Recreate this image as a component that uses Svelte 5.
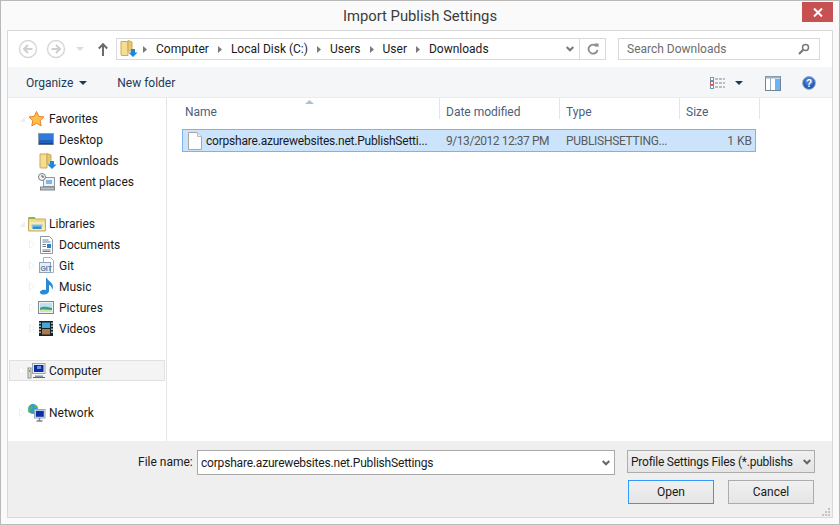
<script>
  const groups = [
    { id: 'fav', label: 'Favorites', icon: 'star', children: [['Desktop','desktop'],['Downloads','folderdl'],['Recent places','recent']] },
    { id: 'lib', label: 'Libraries', icon: 'libs', children: [['Documents','docs'],['Git','git'],['Music','music'],['Pictures','pics'],['Videos','videos']] },
    { id: 'comp', label: 'Computer', icon: 'computer', children: [], active: true },
    { id: 'net', label: 'Network', icon: 'network', children: [] }
  ];
  const crumbs = ['Computer','Local Disk (C:)','Users','User','Downloads'];
</script>

{#snippet icon(name)}
  <svg class="ico" width="20" height="20" viewBox="0 0 20 20">
    {#if name === 'star'}
      <path d="M9.500 2.500l2.300 4.800 5.200.7-3.800 3.600 1 5.200-4.700-2.500-4.700 2.500 1-5.200L2 8l5.200-.7z" fill="#fdbf4a" stroke="#e8842c" stroke-width="1"/>
    {:else if name === 'desktop'}
      <rect x="1.500" y="3.500" width="15" height="11" fill="#1f5fbf" stroke="#8b9bab"/><rect x="2" y="4" width="14" height="6" fill="#2f7bd8"/><rect x="2" y="13" width="14" height="1.500" fill="#27446b"/>
    {:else if name === 'folderdl'}
      <path d="M3 3h7v14H4a1 1 0 0 1-1-1z" fill="#f6dd8f" stroke="#c9a95a"/><path d="M10 2.500l4 1.500v9h-4z" fill="#e8c96f" stroke="#c9a95a"/><path d="M13 10h4v3.500h2.500L15 18l-4.500-4.500H13z" fill="#1b87dd"/>
    {:else if name === 'recent'}
      <rect x="6.500" y="5.500" width="11" height="9" fill="#eef3f7" stroke="#8e9aa3"/><rect x="9" y="8" width="6" height="4" fill="#7fb8dc"/><circle cx="5" cy="5" r="3.500" fill="#f4f4f4" stroke="#77807f"/><path d="M5 3v2h2" fill="none" stroke="#555"/><rect x="3.500" y="15" width="14" height="3" fill="#b8bfc4" stroke="#7d868c"/>
    {:else if name === 'libs'}
      <path d="M1.500 3.500h6l1 1.500h10v12h-17z" fill="#f3d98c" stroke="#c8aa5e"/><rect x="2" y="3" width="6" height="2" fill="#7ac143"/><path d="M3 8h14l1 8H2z" fill="#f9e9b4"/><path d="M5.500 15v-3.500h9V15z" fill="#2c8fd6"/><path d="M4.500 11.500h11" stroke="#7cc0ea" stroke-width="2"/>
    {:else if name === 'docs'}
      <path d="M3.500 1.500h9l3 3v14h-12z" fill="#fff" stroke="#8d97a3"/><path d="M5.500 5h6M5.500 7h8M5.500 15h8M5.500 16.500h8" stroke="#6e7f92"/><rect x="10" y="9" width="4" height="4" fill="#2c7fc4"/><path d="M5.500 9.500h3.500M5.500 11.500h3.500" stroke="#6e7f92"/>
    {:else if name === 'git'}
      <path d="M6.500 1.500h7l3 3v12h-10z" fill="#fff" stroke="#a2b3c5"/><rect x="2.500" y="6.500" width="11" height="10" fill="#e5eef7" stroke="#8ea4bc"/><text x="3.400" y="14.500" font-size="7" font-family="Liberation Sans" font-weight="700" fill="#5a7a9c">GIT</text>
    {:else if name === 'music'}
      <path d="M10 1c.5 3 6 4 6 9 0 1-.5 2-1 3 .2-3-1.500-4.500-3-5v6c0 2.500-3 4-5.500 3.500C3.500 17.500 2 15.500 3.500 14c1.500-1.500 4-1.500 5.500-1V1z" fill="#2b8ad6"/>
    {:else if name === 'pics'}
      <rect x="1.500" y="3.500" width="15" height="12" fill="#eef2f5" stroke="#7f8a94"/><rect x="3" y="5" width="12" height="9" fill="#bfe0ef"/><path d="M3 10c3-2 7-1 12 0v4H3z" fill="#3d9a8e"/><path d="M3 12c4-1 8 0 12 0v2H3z" fill="#d8e49a"/>
    {:else if name === 'videos'}
      <rect x="2" y="2" width="14" height="15" fill="#10262c"/><rect x="5" y="3.500" width="8" height="5.500" fill="#4ba3d8"/><rect x="5" y="10" width="8" height="5.500" fill="#b0764c"/><path d="M3 3.500v12M15 3.500v12" stroke="#d5dde0" stroke-width="1.500" stroke-dasharray="1.500 1.500"/>
    {:else if name === 'computer'}
      <rect x="1" y="7" width="3" height="10" fill="#d9ded3" stroke="#8d9489"/><rect x="1.800" y="9" width="1.400" height="2" fill="#76b043"/><rect x="5.500" y="2.500" width="12.500" height="10" fill="#e6ebef" stroke="#9aa4ad"/><rect x="7" y="4" width="9.500" height="7" fill="#0b2ea8"/><rect x="10" y="5" width="4" height="3" fill="#6c8de0"/><path d="M8 14.500h8v1.500H8z" fill="#8b949c"/><path d="M6 16.500h12" stroke="#5d666e"/>
    {:else if name === 'network'}
      <circle cx="6" cy="6" r="5" fill="#2f9bd8"/><path d="M3 3c2 0 3 1 3 2S3 6 3 8s2 2 3 3l-5-2zM6 1.500c2 1 4 1 5 3L8 5z" fill="#5bb947"/><rect x="7.500" y="6.500" width="10.500" height="8.500" fill="#e6ebef" stroke="#9aa4ad"/><rect x="8.800" y="7.800" width="8" height="6" fill="#0b2ea8"/><path d="M12.500 15v2.500M9.500 18h6" stroke="#7c868f" stroke-width="1.500"/>
    {/if}
  </svg>
{/snippet}

{#snippet tri()}
  <svg class="tree-tri" width="6" height="9" viewBox="0 0 6 9"><path d="M.5.500v8l5-4z" fill="#fff" stroke="#efefef"/></svg>
{/snippet}
{#snippet opened()}
  <svg class="tree-tri" width="6" height="9" viewBox="0 0 6 9"><path d="M6 2.500v5.500H.5z" fill="#eeeeee"/></svg>
{/snippet}

<div class="window">
  <header class="titlebar">
    <span class="title">Import Publish Settings</span>
    <button class="close" aria-label="Close">
      <svg width="10" height="9" viewBox="0 0 10 9"><path d="M1 .5l8 8M9 .5l-8 8" stroke="#fff" stroke-width="2"/></svg>
    </button>
  </header>

  <div class="panel">
    <div class="nav">
      <svg class="circ" width="20" height="20" viewBox="0 0 20 20"><circle cx="10" cy="10" r="8.500" fill="#fff" stroke="#d6d6d6" stroke-width="1.400"/><path d="M14.500 10H6.500M10 6l-4 4 4 4" fill="none" stroke="#cfcfcf" stroke-width="2"/></svg>
      <svg class="circ fwd" width="20" height="20" viewBox="0 0 20 20"><circle cx="10" cy="10" r="8.500" fill="#fff" stroke="#d6d6d6" stroke-width="1.400"/><path d="M5.500 10h8M10 6l4 4-4 4" fill="none" stroke="#cfcfcf" stroke-width="2"/></svg>
      <svg class="recent-caret" width="8" height="4" viewBox="0 0 8 4"><path d="M0 0h8L4 4z" fill="#dcdcdc"/></svg>
      <svg class="up" width="10" height="13" viewBox="0 0 10 13"><path d="M5 13V2M.8 5.500L5 1.200l4.200 4.300" fill="none" stroke="#6b6b6b" stroke-width="2"/></svg>
      <div class="address">
        <svg class="addr-ico" width="20" height="20" viewBox="0 0 20 20"><path d="M3 2.500h7v14H4a1 1 0 0 1-1-1z" fill="#f6dd8f" stroke="#c9a95a"/><path d="M10 1.500l4 1.500v9h-4z" fill="#e8c96f" stroke="#c9a95a"/><path d="M13 10h4v3.500h2.500L15 18l-4.500-4.500H13z" fill="#1b87dd"/></svg>
        {#each crumbs as c}
          <svg class="crumb-arrow" width="4" height="7" viewBox="0 0 4 7"><path d="M0 0l4 3.500L0 7z" fill="#7a7a7a"/></svg>
          <span class="crumb">{c}</span>
        {/each}
        <svg class="addr-drop" width="8" height="6" viewBox="0 0 8 6"><path d="M.7 1L4 4.300 7.300 1" fill="none" stroke="#777" stroke-width="2"/></svg>
        <span class="refresh">
          <svg width="12" height="12" viewBox="0 0 12 12"><path d="M9.700 3.500A4.500 4.500 0 1 0 10.500 7" fill="none" stroke="#8b8b8b" stroke-width="1.800"/><path d="M7.500 0.500h4v4z" fill="#8b8b8b"/></svg>
        </span>
      </div>
      <div class="search">
        <span>Search Downloads</span>
        <svg width="12" height="12" viewBox="0 0 12 12"><circle cx="7.500" cy="4.500" r="3" fill="none" stroke="#777" stroke-width="1.500"/><path d="M5.200 6.800L1 11" stroke="#777" stroke-width="2"/></svg>
      </div>
    </div>

    <div class="toolbar">
      <span class="tool organize">Organize</span>
      <svg class="caret" width="8" height="4" viewBox="0 0 8 4"><path d="M0 0h8L4 4z" fill="#1e395b"/></svg>
      <span class="tool newfolder">New folder</span>
      <span class="spacer"></span>
      <svg class="viewicon" width="15" height="12" viewBox="0 0 15 12">
        <rect x=".500" y=".500" width="3" height="3" fill="#fff" stroke="#7b93ae"/><rect x=".500" y="4.500" width="3" height="3" fill="#fff" stroke="#c45c5c"/><rect x=".500" y="8.500" width="3" height="3" fill="#fff" stroke="#7b93ae"/>
        <path d="M5 2h10M5 6h10M5 10h10" stroke="#7b8794" stroke-dasharray="3 1"/>
      </svg>
      <svg class="caret view-caret" width="8" height="4" viewBox="0 0 8 4"><path d="M0 0h8L4 4z" fill="#1e395b"/></svg>
      <svg class="pane" width="16" height="15" viewBox="0 0 16 15"><rect x=".500" y=".500" width="15" height="14" fill="#fff" stroke="#6e8499"/><rect x=".500" y=".500" width="15" height="2" fill="#9fb2c4"/><path d="M5.500 2v12" stroke="#9fb2c4"/><rect x="10" y="3" width="5" height="11" fill="#6cb4f5"/></svg>
      <svg class="help" width="14" height="14" viewBox="0 0 14 14"><circle cx="7" cy="7" r="6.500" fill="#2a5cb5" stroke="#a9b7c7"/><circle cx="7" cy="5" r="4.500" fill="#5f8fdc" opacity=".6"/><text x="7" y="11" font-size="10" font-weight="700" text-anchor="middle" font-family="Liberation Sans" fill="#fff">?</text></svg>
    </div>

    <div class="main">
      <nav class="side">
        {#each groups as g}
          <div class="group">
            <div class="row top" class:active={g.active}>
              {#if g.children.length}{@render opened()}{:else}{@render tri()}{/if}
              {@render icon(g.icon)}
              <span>{g.label}</span>
            </div>
            {#each g.children as [label, ic]}
              <div class="row child">
                {#if g.id === 'lib'}{@render tri()}{:else}<span class="tri-gap"></span>{/if}
                {@render icon(ic)}
                <span>{label}</span>
              </div>
            {/each}
          </div>
        {/each}
      </nav>

      <section class="list">
        <div class="head">
          <svg class="sort" width="9" height="4" viewBox="0 0 9 4"><path d="M4.500 0L9 4H0z" fill="#a8c4dc"/></svg>
          <div class="col c-name">Name</div>
          <div class="col c-date">Date modified</div>
          <div class="col c-type">Type</div>
          <div class="col c-size">Size</div>
        </div>
        <div class="file">
          <svg class="fileico" width="16" height="18" viewBox="0 0 16 18"><path d="M1.500.500h9l4 4v13h-13z" fill="#fdfdfd" stroke="#a7a7a7"/><path d="M10.500.500v4h4" fill="#eee" stroke="#bdbdbd"/></svg>
          <span class="f-name">corpshare.azurewebsites.net.PublishSetti...</span>
          <span class="f-date">9/13/2012 12:37 PM</span>
          <span class="f-type">PUBLISHSETTING...</span>
          <span class="f-size">1 KB</span>
        </div>
      </section>
    </div>

    <footer class="bottom">
      <div class="line1">
        <label class="fn" for="fname">File name:</label>
        <div class="input" id="fname">
          <span class="input-text">corpshare.azurewebsites.net.PublishSettings</span>
          <svg width="8" height="6" viewBox="0 0 8 6"><path d="M.7 1L4 4.300 7.300 1" fill="none" stroke="#666" stroke-width="2"/></svg>
        </div>
        <div class="filter">
          <span class="filter-text">Profile Settings Files (*.publishs</span>
          <svg width="8" height="6" viewBox="0 0 8 6"><path d="M.7 1L4 4.300 7.300 1" fill="none" stroke="#666" stroke-width="2"/></svg>
        </div>
      </div>
      <div class="line2">
        <button class="btn primary">Open</button>
        <button class="btn">Cancel</button>
      </div>
      <svg class="grip" width="8" height="8" viewBox="0 0 8 8"><path d="M6 0h2v2H6zM3 3h2v2H3zM6 3h2v2H6zM0 6h2v2H0zM3 6h2v2H3zM6 6h2v2H6z" fill="#c4c4c4"/></svg>
    </footer>
  </div>
</div>

<style>
  :global(body) { margin: 0; }
  * { box-sizing: border-box; }
  .window {
    width: 840px; height: 525px; position: relative; overflow: hidden;
    display: flex; flex-direction: column;
    background: #fafafa; border: 1px solid #b9b9b9; border-bottom-color: #bcbcbc;
    padding: 0 6px 6px 6px;
    font: 12px/16px Roboto, "Open Sans", sans-serif;
    color: #1a1a1a;
  }
  .titlebar { height: 29px; flex: none; display: flex; align-items: center; justify-content: center; }
  .title { font-size: 14.800px; color: #3c3c3c; margin-top: 1px; }
  .close {
    position: absolute; top: 1px; right: 6px; width: 31px; height: 20px; padding: 0; border: 0;
    background: #c75050; display: flex; align-items: center; justify-content: center;
  }
  .panel { flex: 1; min-height: 0; display: flex; flex-direction: column; border: 1px solid #d9d9d9; background: #fff; }

  .nav { height: 36px; flex: none; display: flex; align-items: center; padding: 0 12px 0 10px; }
  .circ { margin-left: 0; flex: none; }
  .circ.fwd { margin-left: 8px; }
  .recent-caret { margin-left: 10px; flex: none; }
  .up { margin-left: 14px; margin-right: 8px; flex: none; }
  .address {
    width: 490px; height: 22px; flex: none; display: flex; align-items: center;
    border: 1px solid #d9d9d9; padding-left: 1px; color: #1a1a1a;
  }
  .addr-ico { margin-right: 5px; flex: none; }
  .crumb-arrow { flex: none; margin-right: 9px; }
  .crumb { margin-right: 9px; white-space: nowrap; }
  .addr-drop { margin-left: auto; margin-right: 5px; flex: none; }
  .refresh { width: 26px; height: 20px; border-left: 1px solid #d9d9d9; display: flex; align-items: center; justify-content: center; flex: none; }
  .search {
    width: 202px; height: 22px; margin-left: auto; flex: none; display: flex; align-items: center; justify-content: space-between;
    border: 1px solid #d9d9d9; padding: 0 9px 0 8px; color: #6d6d6d;
  }

  .toolbar { height: 31px; flex: none; display: flex; align-items: center; background: #f5f6f7; border-bottom: 1px solid #ececec; color: #1e395b; padding: 2px 16px 0 18px; }
  .caret { flex: none; }
  .organize { margin-right: 6px; }
  .newfolder { margin-left: 30px; }
  .spacer { flex: 1; }
  .viewicon { flex: none; margin-right: 10px; }
  .view-caret { margin-right: 22px; }
  .pane { flex: none; margin-right: 21px; }
  .help { flex: none; }

  .main { flex: 1; min-height: 0; display: flex; }
  .side { width: 159px; flex: none; border-right: 1px solid #e5e5e5; padding-top: 10px; display: flex; flex-direction: column; gap: 21px; }
  .row { height: 21px; display: flex; align-items: center; white-space: nowrap; }
  .top { padding-left: 11px; }
  .top .ico { margin: 0 2px 0 2px; }
  .child { padding-left: 21px; }
  .child .ico { margin: 0 2px 0 2px; }
  .tree-tri { flex: none; }
  .tri-gap { width: 6px; flex: none; }
  .ico { flex: none; }
  .row.active { background: #f4f4f4; border: 1px solid #e0e0e0; margin-left: 1px; margin-right: 1px; padding-left: 9px; }

  .list { flex: 1; min-width: 0; position: relative; }
  .head { height: 21px; display: flex; color: #4c607a; position: relative; }
  .sort { position: absolute; left: 138px; top: 2px; }
  .col { border-right: 1px solid #e5e5e5; padding: 6px 0 0 6px; }
  .c-name { width: 273px; padding-left: 18px; }
  .c-date, .c-type, .c-size { width: 120px; }
  .c-size { width: 80px; }
  .file {
    margin: 10px 0 0 15px; width: 574px; height: 23px; display: flex; align-items: center; position: relative;
    background: #cce4fb; border: 1px solid #7cb3ea; color: #5a5a5a; white-space: nowrap;
  }
  .fileico { margin-left: 4px; margin-right: 3px; flex: none; }
  .f-name { color: #1a1a1a; width: 240px; flex: none; letter-spacing: -.21px; }
  .f-date { width: 120px; flex: none; letter-spacing: -.44px; }
  .f-type { flex: 1; letter-spacing: -.3px; }
  .f-size { margin-right: 3px; }

  .bottom { height: 76px; flex: none; background: #efefef; position: relative; padding: 9px 18px 0 0; }
  .line1 { display: flex; align-items: flex-start; }
  .fn { margin-left: 130px; width: 59px; margin-top: 4px; flex: none; }
  .input {
    width: 418px; height: 25px; flex: none; background: #fff; border: 1px solid #a9a9a9; padding: 1px 4px 0 3px;
    display: flex; align-items: center; justify-content: space-between;
  }
  .input-text { letter-spacing: -.19px; }
  .filter {
    width: 188px; height: 23px; flex: none; margin-left: 12px; border: 1px solid #acacac; padding: 1px 3px 0 3px;
    background: linear-gradient(#f0f0f0, #e5e5e5); display: flex; align-items: center; justify-content: space-between; white-space: nowrap;
  }
  .filter-text { letter-spacing: -.24px; }
  .line2 { display: flex; justify-content: flex-end; gap: 14px; margin-top: 5px; }
  .btn {
    width: 86px; height: 24px; font: inherit; color: #1a1a1a; padding: 0;
    background: linear-gradient(#f0f0f0, #e5e5e5); border: 1px solid #acacac;
  }
  .btn.primary { border-color: #3399ff; }
  .grip { position: absolute; right: 2px; bottom: 1px; }
</style>
